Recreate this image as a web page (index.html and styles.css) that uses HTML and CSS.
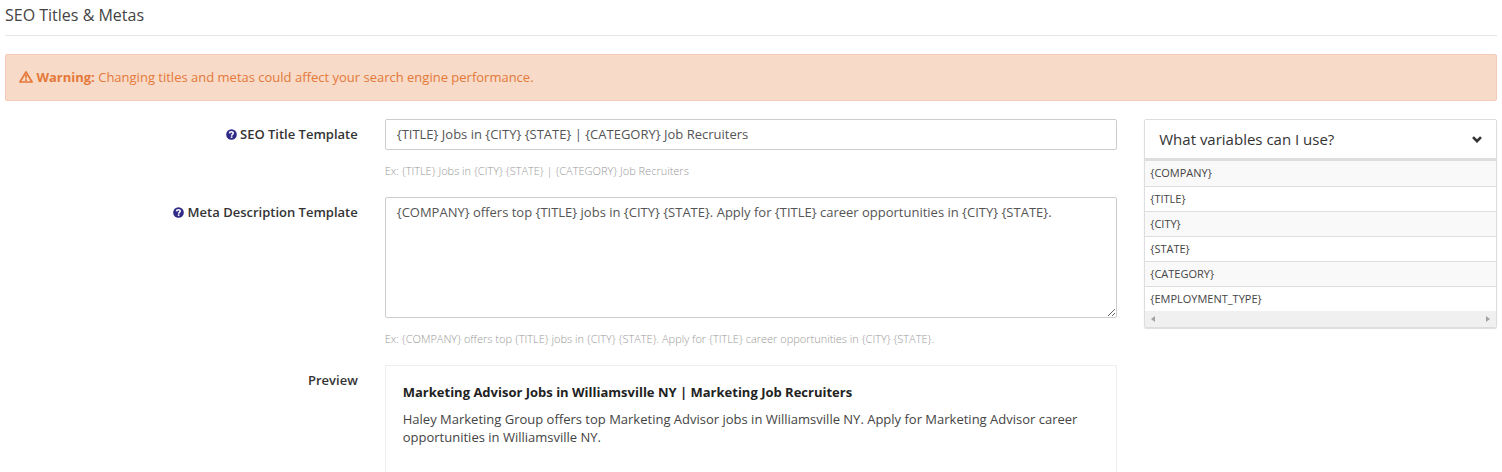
FILE: index.html
```html
<!DOCTYPE html>
<html lang="en">
<head>
    <meta charset="utf-8">
    <title>SEO Titles &amp; Metas</title>
    <link rel="stylesheet" href="styles.css">
</head>
<body>
    <h3 class="page-title">SEO Titles &amp; Metas</h3>

    <div class="alert">
        <svg class="icon-warning" viewBox="0 0 14 12" aria-hidden="true">
            <path d="M7 1 13.1 11H.9z" fill="none" stroke="currentColor" stroke-width="1.7" stroke-linejoin="round"/>
            <path d="M6 3.8h2L7.6 7.7H6.4zM6.1 8.3h1.8v1.6H6.1z" fill="currentColor"/>
        </svg>
        <strong>Warning:</strong> Changing titles and metas could affect your search engine performance.
    </div>

    <div class="row">
        <form class="seo-form">
            <div class="form-group">
                <label for="seoTitle">
                    <svg class="icon-help" viewBox="0 0 12 12" aria-hidden="true">
                        <circle cx="6" cy="6" r="5.8" fill="currentColor"/>
                        <path d="M3.8 4.7C4 2.4 8 2.4 7.9 4.6 7.8 5.9 6.1 5.8 6.1 7.4" fill="none" stroke="#fff" stroke-width="1.7"/>
                        <path d="M5.2 8h1.8v1.7H5.2z" fill="#fff"/>
                    </svg>
                    SEO Title Template
                </label>
                <div class="field">
                    <input type="text" id="seoTitle" class="form-control" value="{TITLE} Jobs in {CITY} {STATE} | {CATEGORY} Job Recruiters">
                    <p class="help-block">Ex: {TITLE} Jobs in {CITY} {STATE} | {CATEGORY} Job Recruiters</p>
                </div>
            </div>

            <div class="form-group">
                <label for="metaDescription">
                    <svg class="icon-help" viewBox="0 0 12 12" aria-hidden="true">
                        <circle cx="6" cy="6" r="5.8" fill="currentColor"/>
                        <path d="M3.8 4.7C4 2.4 8 2.4 7.9 4.6 7.8 5.9 6.1 5.8 6.1 7.4" fill="none" stroke="#fff" stroke-width="1.7"/>
                        <path d="M5.2 8h1.8v1.7H5.2z" fill="#fff"/>
                    </svg>
                    Meta Description Template
                </label>
                <div class="field">
                    <textarea id="metaDescription" class="form-control" rows="6">{COMPANY} offers top {TITLE} jobs in {CITY} {STATE}. Apply for {TITLE} career opportunities in {CITY} {STATE}.</textarea>
                    <p class="help-block">Ex: {COMPANY} offers top {TITLE} jobs in {CITY} {STATE}. Apply for {TITLE} career opportunities in {CITY} {STATE}.</p>
                </div>
            </div>

            <div class="form-group">
                <div class="group-label">Preview</div>
                <div class="field preview">
                    <h4>Marketing Advisor Jobs in Williamsville NY | Marketing Job Recruiters</h4>
                    <p>Haley Marketing Group offers top Marketing Advisor jobs in Williamsville NY. Apply for Marketing Advisor career opportunities in Williamsville NY.</p>
                </div>
            </div>
        </form>

        <div class="panel">
            <button type="button" class="panel-heading" aria-expanded="true">
                What variables can I use?
                <svg class="icon-chevron" viewBox="0 0 10 7" aria-hidden="true">
                    <path d="M1 1.2 5 5.2 9 1.2" fill="none" stroke="currentColor" stroke-width="2.6"/>
                </svg>
            </button>
            <table class="variables">
                <tbody>
                    <tr><td>{COMPANY}</td></tr>
                    <tr><td>{TITLE}</td></tr>
                    <tr><td>{CITY}</td></tr>
                    <tr><td>{STATE}</td></tr>
                    <tr><td>{CATEGORY}</td></tr>
                    <tr><td>{EMPLOYMENT_TYPE}</td></tr>
                </tbody>
            </table>
            <div class="scrollbar">
                <svg viewBox="0 0 4 6" aria-hidden="true"><path d="M4 0v6L0 3z" fill="currentColor"/></svg>
                <svg viewBox="0 0 4 6" aria-hidden="true"><path d="M0 0v6l4-3z" fill="currentColor"/></svg>
            </div>
        </div>
    </div>
</body>
</html>
```

FILE: styles.css
```css
* {
    box-sizing: border-box;
}
body {
    margin: 0;
    padding: 4px 5px 0;
    font-family: "Open Sans", sans-serif;
    font-size: 13px;
    line-height: 18px;
    color: #444;
    background-color: #fff;
    overflow: hidden;
}
.page-title {
    margin: 0 0 18px;
    padding-bottom: 9px;
    border-bottom: 1px solid #e5e5e5;
    font-size: 16px;
    font-weight: 400;
    line-height: 22px;
    color: #444;
}
.alert {
    margin-bottom: 18px;
    padding: 13px 13px 14px;
    border: 1px solid #f5c9b8;
    border-radius: 2px;
    background-color: #f7dac7;
    color: #e4793a;
}
.alert strong {
    font-weight: 700;
}
.icon-warning {
    width: 14px;
    height: 12px;
    vertical-align: -1px;
}

/* 12 column layout: form takes 9, panel takes 3 */
.row {
    display: grid;
    grid-template-columns: repeat(12, 1fr);
    column-gap: 27px;
    align-items: start;
}
.seo-form {
    grid-column: span 9;
}
.form-group {
    display: grid;
    grid-template-columns: repeat(9, 1fr);
    column-gap: 27px;
    margin-bottom: 17px;
}
.form-group label,
.group-label {
    grid-column: span 3;
    padding-top: 6px;
    text-align: right;
    font-weight: 600;
    color: #333;
}
.icon-help {
    width: 11px;
    height: 11px;
    vertical-align: -1px;
    color: #2f2a86;
}
.field {
    grid-column: span 6;
    min-width: 0;
}
.form-control {
    display: block;
    width: 100%;
    height: 31px;
    margin: 0;
    padding: 5px 11px 7px;
    border: 1px solid #ccc;
    border-radius: 2px;
    background-color: #fff;
    font-family: inherit;
    font-size: 13px;
    line-height: 18px;
    color: #555;
}
textarea.form-control {
    height: 121px;
    resize: vertical;
}
.help-block {
    margin: 12px 0 0;
    font-size: 11px;
    font-weight: 300;
    color: #999;
}
.preview {
    min-height: 130px;
    padding: 17px;
    border: 1px solid #eee;
}
.preview h4 {
    margin: 0 0 9px;
    font-size: 13px;
    font-weight: 700;
    color: #222;
}
.preview p {
    margin: 0;
}

.panel {
    grid-column: span 3;
    border: 1px solid #ddd;
    border-radius: 2px;
    box-shadow: 0 1px 1px #ddd;
}
.panel-heading {
    display: flex;
    align-items: center;
    justify-content: space-between;
    width: 100%;
    padding: 10px 14px;
    border: 0;
    border-bottom: 3px solid #ddd;
    background-color: #fff;
    font-family: inherit;
    font-size: 15px;
    font-weight: 500;
    line-height: 18px;
    color: #333;
}
.icon-chevron {
    width: 10px;
    height: 7px;
}
.variables {
    width: 100%;
    border-collapse: collapse;
    font-size: 11px;
}
.variables td {
    height: 25px;
    padding: 3px 5px;
    border-bottom: 1px solid #ddd;
}
.variables tr:nth-child(odd) {
    background-color: #f9f9f9;
}
.variables tr:last-child td {
    border-bottom: 0;
}
.scrollbar {
    display: flex;
    align-items: center;
    justify-content: space-between;
    height: 16px;
    padding: 0 6px;
    background-color: #f0f0f0;
    color: #a3a3a3;
}
.scrollbar svg {
    width: 4px;
    height: 6px;
}
```
